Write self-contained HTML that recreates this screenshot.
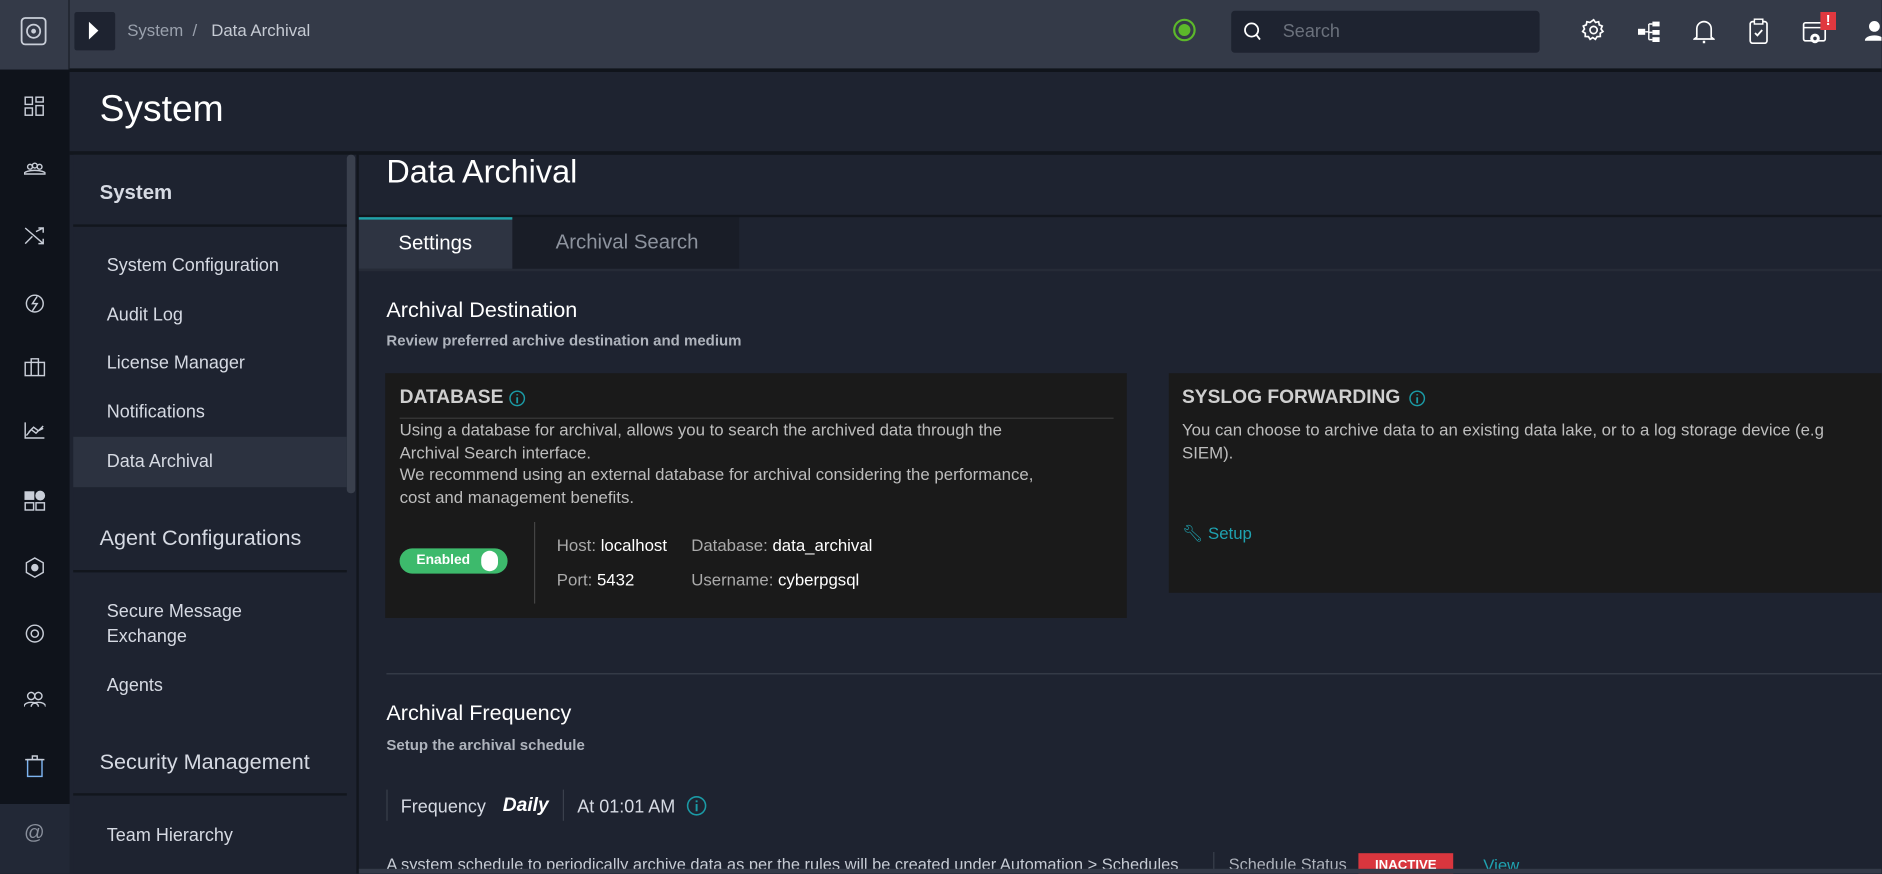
<!DOCTYPE html>
<html><head><meta charset="utf-8"><style>
*{margin:0;padding:0;box-sizing:border-box}
html,body{width:1882px;height:874px;overflow:hidden;background:#1e2330}
#w{position:absolute;left:0;top:0;width:1568px;height:728px;transform:scale(1.2);transform-origin:0 0;font-family:"Liberation Sans",sans-serif;color:#d6dae3;background:#1e2330;overflow:hidden}
.a{position:absolute;white-space:nowrap}
.ic{position:absolute}
svg{display:block}
</style></head><body><div id="w">
<div class="a" style="left:0;top:0;width:1568px;height:58px;background:#343a48"></div>
<div class="a" style="left:57px;top:0;width:1px;height:58px;background:#1a1e28"></div>
<svg class="ic" style="left:17px;top:14px" width="22" height="24" viewBox="0 0 22 24"><rect x="1" y="1" width="20" height="22" rx="3" fill="none" stroke="#c9ced8" stroke-width="1.5"/><circle cx="11" cy="12" r="5.5" fill="none" stroke="#c9ced8" stroke-width="1.5"/><circle cx="11" cy="12" r="2" fill="#c9ced8"/></svg>
<div class="a" style="left:62px;top:10px;width:34px;height:32px;background:#1e2330;border-radius:2px"></div>
<svg class="ic" style="left:74px;top:18px" width="9" height="15"><path d="M0 0L8 7.5L0 15Z" fill="#fff"/></svg>
<div class="a" style="left:106px;top:17px;font-size:14px;color:#9aa1ad">System&nbsp; /</div>
<div class="a" style="left:176px;top:17px;font-size:14px;color:#c6cbd4">Data Archival</div>
<svg class="ic" style="left:977px;top:15px" width="20" height="20"><circle cx="10" cy="10" r="8.5" fill="none" stroke="#5cb82a" stroke-width="1.8"/><circle cx="10" cy="10" r="5" fill="#5cb82a"/></svg>
<div class="a" style="left:1026px;top:9px;width:257px;height:35px;background:#1e2330;border-radius:3px"></div>
<svg class="ic" style="left:1036px;top:18px" width="16" height="17"><circle cx="7" cy="7" r="5.5" fill="none" stroke="#fff" stroke-width="1.5"/><path d="M11 11L14 15" stroke="#fff" stroke-width="1.5"/></svg>
<div class="a" style="left:1069px;top:18px;font-size:15px;color:#6b717c">Search</div>
<svg class="ic" style="left:1318px;top:15px" width="20" height="20" viewBox="0 0 20 20"><path d="M10 1.5l1.6 2.2 2.6-.6.5 2.6 2.5 1-1 2.5 1.6 2.1-2.3 1.4.1 2.7-2.7.1-1.4 2.3-2.2-1.5-2.2 1.5-1.4-2.3-2.7-.1.1-2.7-2.3-1.4 1.6-2.1-1-2.5 2.5-1 .5-2.6 2.6.6z" fill="none" stroke="#fff" stroke-width="1.4"/><circle cx="10" cy="10" r="3" fill="none" stroke="#fff" stroke-width="1.4"/></svg>
<svg class="ic" style="left:1365px;top:17px" width="19" height="19"><rect x="0" y="7" width="6" height="5" fill="#fff"/><rect x="12" y="1" width="6" height="4" fill="#fff"/><rect x="12" y="8" width="6" height="4" fill="#fff"/><rect x="12" y="14" width="6" height="4" fill="#fff"/><path d="M6 9.5H9M9 3V16M9 3H12M9 10H12M9 16H12" stroke="#fff" stroke-width="1.2" fill="none"/></svg>
<svg class="ic" style="left:1411px;top:15px" width="18" height="22"><path d="M3 16V9a6 6 0 0 1 12 0v7l2 1.5H1z" fill="none" stroke="#fff" stroke-width="1.4"/><path d="M8 19h2v2h-2z" fill="#fff"/></svg>
<svg class="ic" style="left:1457px;top:15px" width="17" height="22"><rect x="1.5" y="3" width="14" height="18" rx="2" fill="none" stroke="#fff" stroke-width="1.4"/><rect x="5" y="1" width="7" height="4" fill="#343a48" stroke="#fff" stroke-width="1.2"/><path d="M5.5 12.5l2 2 4-4.5" fill="none" stroke="#fff" stroke-width="1.5"/></svg>
<svg class="ic" style="left:1502px;top:18px" width="22" height="20"><rect x="1" y="1" width="18" height="15" rx="1.5" fill="none" stroke="#fff" stroke-width="1.4"/><path d="M1 5H19" stroke="#fff" stroke-width="1.2"/><circle cx="10.5" cy="14" r="4" fill="#fff"/><circle cx="10.5" cy="14" r="1.5" fill="#343a48"/></svg>
<div class="a" style="left:1517px;top:10px;width:13px;height:15px;background:#e0383f;color:#fff;font-size:12px;font-weight:bold;text-align:center;line-height:15px">!</div>
<svg class="ic" style="left:1554px;top:17px" width="14" height="18"><circle cx="8" cy="5" r="4.5" fill="#fff"/><path d="M0 17c0-6 16-6 16 0z" fill="#fff"/></svg>
<div class="a" style="left:58px;top:57px;width:1510px;height:3px;background:#10141b"></div>
<div class="a" style="left:0;top:58px;width:58px;height:612px;background:#0f131b"></div>
<div class="a" style="left:0;top:670px;width:58px;height:58px;background:#222836"></div>
<div class="a" style="left:20px;top:684px;font-size:17px;color:#8a909c">@</div>
<svg class="ic" style="left:20px;top:80px" width="18" height="270" fill="none" stroke="#c9ced8" stroke-width="1.2">
<rect x="1" y="1" width="6" height="6"/><rect x="10" y="1" width="6" height="4"/><rect x="1" y="10" width="6" height="6"/><rect x="10" y="8" width="6" height="8"/>
<circle cx="5" cy="59" r="2"/><circle cx="9" cy="58" r="2"/><circle cx="13" cy="59" r="2"/><path d="M0 65c0-4 18-4 18 0z"/>
<path d="M1 110L16 123M1 123L7 117M10 113L16 110M12 110H16V114M16 119V123H12"/>
<circle cx="9" cy="173" r="7"/><path d="M11 167L7 173H11L7 179"/>
<rect x="1" y="222" width="16" height="11"/><path d="M6 222V219H12V222M6 222V233M12 222V233"/>
</svg>
<svg class="ic" style="left:20px;top:350px" width="18" height="300" fill="none" stroke="#c9ced8" stroke-width="1.2">
<path d="M1 2V15H17M2 13L6 8L10 11L16 5M4 10L8 6L12 9L16 7"/>
<rect x="1" y="60" width="7" height="6" fill="#c9ced8"/><circle cx="13.5" cy="63" r="3.5" fill="#c9ced8"/><rect x="1" y="69" width="7" height="6"/><rect x="10" y="69" width="7" height="6"/>
<path d="M9 115L16 119V127L9 131L2 127V119Z"/><circle cx="9" cy="123" r="2.5" fill="#c9ced8"/>
<circle cx="9" cy="178" r="7"/><circle cx="9" cy="178" r="3"/>
<circle cx="6" cy="230" r="3"/><circle cx="12" cy="230" r="3"/><path d="M0 239c0-5 12-5 12 0M6 239c0-5 12-5 12 0"/>
<rect x="3" y="283" width="12" height="14" stroke="#7db4f0"/><path d="M1 283H17M7 283V280H11V283"/>
</svg>
<div class="a" style="left:58px;top:60px;width:1510px;height:66px;background:#1e2330"></div>
<div class="a" style="left:83px;top:73px;font-size:31px;color:#fff">System</div>
<div class="a" style="left:58px;top:126px;width:1510px;height:3px;background:#12161d"></div>
<div class="a" style="left:61px;top:129px;width:236px;height:599px;background:#1e2330"></div>
<div class="a" style="left:297px;top:129px;width:2px;height:599px;background:#12161d"></div>
<div class="a" style="left:289px;top:129px;width:7px;height:282px;background:#3a404d;border-radius:3px"></div>
<div class="a" style="left:83px;top:151px;font-size:17px;font-weight:bold;color:#d6dae3">System</div>
<div class="a" style="left:61px;top:187px;width:228px;height:2px;background:#12161d"></div>
<div class="a" style="left:89px;top:213px;font-size:15px">System Configuration</div>
<div class="a" style="left:89px;top:254px;font-size:15px">Audit Log</div>
<div class="a" style="left:89px;top:294px;font-size:15px">License Manager</div>
<div class="a" style="left:89px;top:335px;font-size:15px">Notifications</div>
<div class="a" style="left:61px;top:364px;width:228px;height:42px;background:#2c3240"></div>
<div class="a" style="left:89px;top:376px;font-size:15px">Data Archival</div>
<div class="a" style="left:83px;top:438px;font-size:18px;color:#d6dae3">Agent Configurations</div>
<div class="a" style="left:61px;top:475px;width:228px;height:2px;background:#12161d"></div>
<div class="a" style="left:89px;top:501px;font-size:15px">Secure Message</div>
<div class="a" style="left:89px;top:522px;font-size:15px">Exchange</div>
<div class="a" style="left:89px;top:563px;font-size:15px">Agents</div>
<div class="a" style="left:83px;top:625px;font-size:18px;color:#d6dae3">Security Management</div>
<div class="a" style="left:61px;top:661px;width:228px;height:2px;background:#12161d"></div>
<div class="a" style="left:89px;top:688px;font-size:15px">Team Hierarchy</div>
<div class="a" style="left:322px;top:128px;font-size:27px;color:#fff">Data Archival</div>
<div class="a" style="left:299px;top:179px;width:1269px;height:2px;background:#12161d"></div>
<div class="a" style="left:299px;top:181px;width:128px;height:43px;background:#2e3442;border-top:2px solid #1fa2a8"></div>
<div class="a" style="left:332px;top:193px;font-size:17px;color:#fff">Settings</div>
<div class="a" style="left:427px;top:181px;width:189px;height:43px;background:#191d27"></div>
<div class="a" style="left:463px;top:192px;font-size:17px;color:#8d939e">Archival Search</div>
<div class="a" style="left:299px;top:224px;width:1269px;height:2px;background:#262b37"></div>
<div class="a" style="left:322px;top:248px;font-size:18px;color:#fff">Archival Destination</div>
<div class="a" style="left:322px;top:277px;font-size:12.5px;font-weight:bold;color:#aeb3bc">Review preferred archive destination and medium</div>
<div class="a" style="left:321px;top:311px;width:618px;height:204px;background:#1a1a1a"></div>
<div class="a" style="left:333px;top:323px;font-size:16px;font-weight:bold;color:#cfcfcf">DATABASE</div>
<svg class="ic" style="left:424px;top:325px" width="14" height="14"><circle cx="7" cy="7" r="6" fill="none" stroke="#1b9aa5" stroke-width="1.2"/><path d="M7 6V11M7 3.5V4.5" stroke="#1b9aa5" stroke-width="1.5"/></svg>
<div class="a" style="left:333px;top:348px;width:595px;height:1px;background:#3a3a3a"></div>
<div class="a" style="left:333px;top:349px;font-size:14px;line-height:18.5px;color:#bdbdbd;white-space:normal;width:548px">Using a database for archival, allows you to search the archived data through the Archival Search interface.<br>We recommend using an external database for archival considering the performance, cost and management benefits.</div>
<div class="a" style="left:333px;top:457px;width:90px;height:21px;background:#3dba6c;border-radius:11px"></div>
<div class="a" style="left:347px;top:461px;font-size:11.5px;font-weight:bold;color:#fff">Enabled</div>
<div class="a" style="left:401px;top:459px;width:14px;height:17px;background:#fff;border-radius:8px"></div>
<div class="a" style="left:445px;top:435px;width:1px;height:68px;background:#444"></div>
<div class="a" style="left:464px;top:446px;font-size:14px;color:#aaa">Host: <span style="color:#fff">localhost</span></div>
<div class="a" style="left:576px;top:446px;font-size:14px;color:#aaa">Database: <span style="color:#fff">data_archival</span></div>
<div class="a" style="left:464px;top:475px;font-size:14px;color:#aaa">Port: <span style="color:#fff">5432</span></div>
<div class="a" style="left:576px;top:475px;font-size:14px;color:#aaa">Username: <span style="color:#fff">cyberpgsql</span></div>
<div class="a" style="left:974px;top:311px;width:600px;height:183px;background:#1a1a1a"></div>
<div class="a" style="left:985px;top:323px;font-size:16px;font-weight:bold;color:#cfcfcf">SYSLOG FORWARDING</div>
<svg class="ic" style="left:1174px;top:325px" width="14" height="14"><circle cx="7" cy="7" r="6" fill="none" stroke="#1b9aa5" stroke-width="1.2"/><path d="M7 6V11M7 3.5V4.5" stroke="#1b9aa5" stroke-width="1.5"/></svg>
<div class="a" style="left:985px;top:349px;font-size:14px;line-height:18.5px;color:#bdbdbd;white-space:normal;width:560px">You can choose to archive data to an existing data lake, or to a log storage device (e.g SIEM).</div>
<div class="a" style="left:985px;top:436px;font-size:14px;color:#1fa2b0">&#128295;&#xFE0E; Setup</div>
<div class="a" style="left:322px;top:561px;width:1246px;height:1px;background:#3a404c"></div>
<div class="a" style="left:322px;top:584px;font-size:18px;color:#fff">Archival Frequency</div>
<div class="a" style="left:322px;top:614px;font-size:12.5px;font-weight:bold;color:#aeb3bc">Setup the archival schedule</div>
<div class="a" style="left:322px;top:658px;width:1px;height:26px;background:#3a404c"></div>
<div class="a" style="left:334px;top:664px;font-size:15px;color:#d6dae3">Frequency</div>
<div class="a" style="left:419px;top:663px;font-size:16px;font-weight:bold;font-style:italic;color:#fff">Daily</div>
<div class="a" style="left:469px;top:658px;width:1px;height:26px;background:#3a404c"></div>
<div class="a" style="left:481px;top:664px;font-size:15px;color:#d6dae3">At 01:01 AM</div>
<svg class="ic" style="left:572px;top:663px" width="17" height="17"><circle cx="8.5" cy="8.5" r="7.5" fill="none" stroke="#1b9aa5" stroke-width="1.3"/><path d="M8.5 7V13M8.5 4V5.5" stroke="#1b9aa5" stroke-width="1.6"/></svg>
<div class="a" style="left:322px;top:713px;font-size:13.7px;color:#c6cbd4">A system schedule to periodically archive data as per the rules will be created under Automation &gt; Schedules</div>
<div class="a" style="left:1011px;top:710px;width:1px;height:18px;background:#3a404c"></div>
<div class="a" style="left:1024px;top:713px;font-size:13.5px;color:#aeb3bc">Schedule Status</div>
<div class="a" style="left:1132px;top:711px;width:79px;height:20px;background:#d9363e;color:#fff;font-size:11px;font-weight:bold;text-align:center;line-height:20px">INACTIVE</div>
<div class="a" style="left:1236px;top:713px;font-size:14px;color:#1fa2b0">View</div>
<div class="a" style="left:299px;top:724px;width:1269px;height:4px;background:#343a48"></div>
</div></body></html>
